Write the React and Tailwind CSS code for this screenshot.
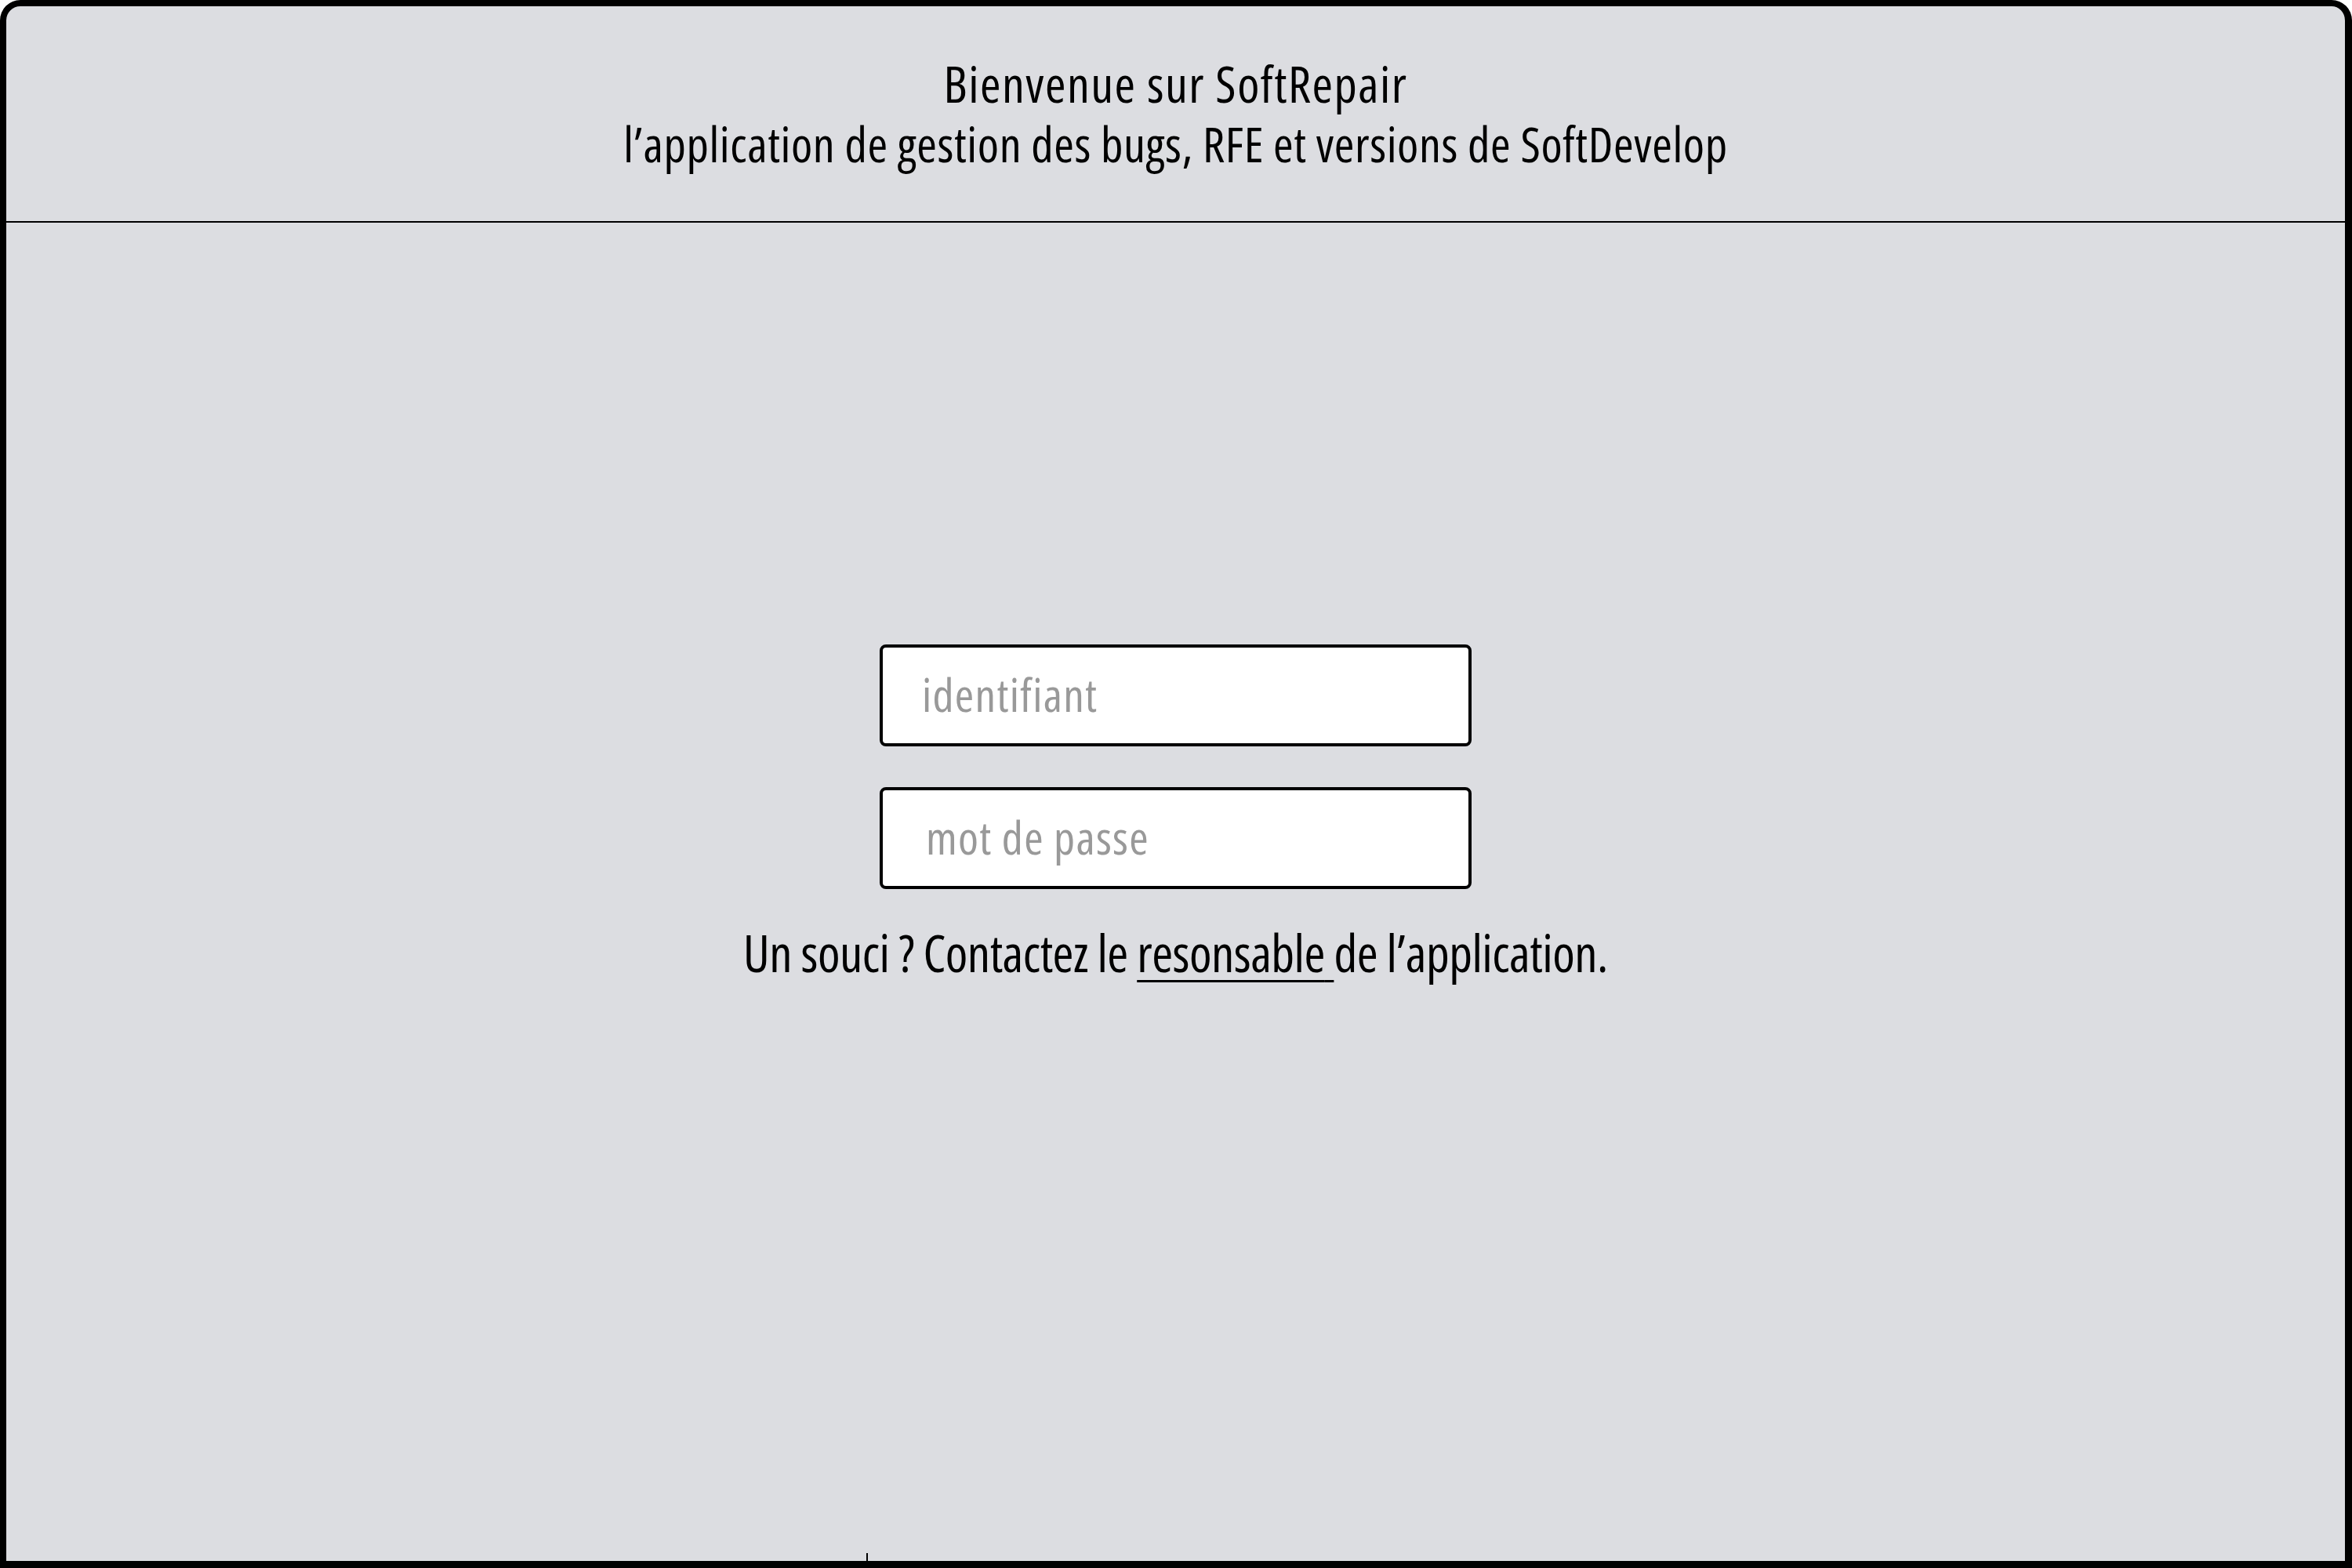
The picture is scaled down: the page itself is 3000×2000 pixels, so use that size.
const Field = ({ placeholder, type = "text", inset = "pl-[50px]" }) => (
  <input
    type={type}
    placeholder={placeholder}
    className={`${inset} w-[755px] h-[130px] rounded-[8px] border-[4px] border-black bg-white pr-6 pb-[5px] text-[59px] tracking-[1.3px] text-black placeholder:text-[#999999] outline-none font-['Open_Sans',sans-serif] [font-stretch:75%]`}
  />
);

export default function App() {
  return (
    <div className="w-[3000px] h-[2000px] bg-white">
      <div className="w-full h-full flex flex-col bg-[#dcdde1] border-[8px] border-b-[9px] border-r-[9px] border-black rounded-t-[26px] font-['Open_Sans',sans-serif] [font-stretch:75%] text-black">
        <header className="h-[276px] shrink-0 border-b-[2px] border-black flex flex-col items-center pt-[67px] gap-[13px]">
          <h1 className="text-[64px] leading-none font-medium tracking-[1.5px]">Bienvenue sur SoftRepair</h1>
          <p className="text-[62px] leading-none font-normal tracking-[0.6px]">
            l’application de gestion des bugs, RFE et versions de SoftDevelop
          </p>
        </header>

        <main className="flex-1 flex flex-col items-center pt-[538px]">
          <form className="flex flex-col items-center gap-[52px]">
            <Field placeholder="identifiant" />
            <Field placeholder="mot de passe" type="password" inset="pl-[55px]" />
          </form>
          <p className="mt-[49px] text-[65px] leading-none tracking-[-0.5px]">
            Un souci ? Contactez le{" "}
            <a href="#" className="underline decoration-[3px] underline-offset-[10px]">
              resonsable{" "}
            </a>
            de l’application.
          </p>
          <div className="mt-auto self-start ml-[1097px] w-[2px] h-[10px] bg-black" />
        </main>
      </div>
    </div>
  );
}
